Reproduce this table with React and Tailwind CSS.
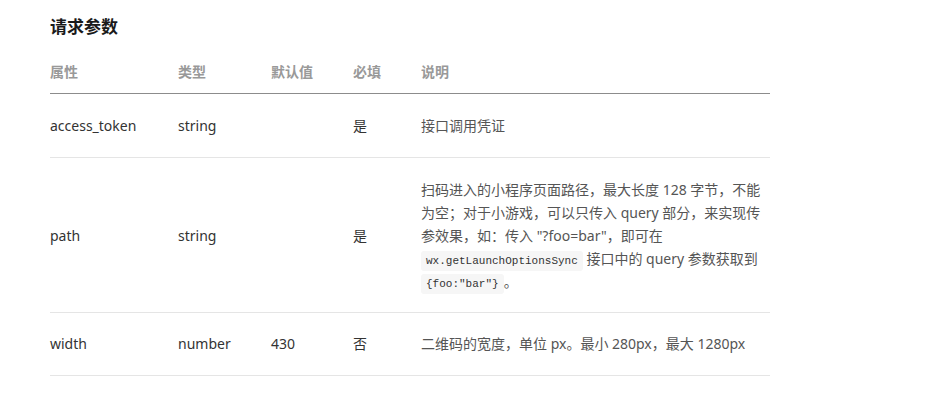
import React from 'react';

const codeCls =
  "rounded-[3px] bg-[#f6f6f6] px-[5px] py-[4px] font-['Liberation_Mono',monospace] text-[11px] leading-[12px] text-[#333]";

const rows = [
  { name: 'access_token', type: 'string', def: '', req: '是', pad: 'pt-[20px] pb-[20px]', desc: '接口调用凭证' },
  {
    name: 'path',
    type: 'string',
    def: '',
    req: '是',
    pad: 'pt-[20px] pb-[19px]',
    desc: (
      <>
        扫码进入的小程序页面路径，最大长度 128 字节，不能为空；对于小游戏，可以只传入 query 部分，来实现传参效果，如：传入 "?foo=bar"，即可在{' '}
        <code className={codeCls}>wx.getLaunchOptionsSync</code> 接口中的 query 参数获取到{' '}
        <code className={codeCls}>{'{foo:"bar"}'}</code>
        。
      </>
    ),
  },
  { name: 'width', type: 'number', def: '430', req: '否', pad: 'pt-[19px] pb-[20px]', desc: '二维码的宽度，单位 px。最小 280px，最大 1280px' },
];

export default function App() {
  return (
    <div className="min-h-screen bg-white px-[50px] pt-[14px] font-['Noto_Sans','Noto_Sans_CJK_SC',sans-serif] text-[14px] text-[#333]">
      <h3 className="text-[17px] font-bold leading-[26px] text-[#1a1a1a]">请求参数</h3>
      <table className="mt-[13px] w-[720px] table-fixed border-collapse">
        <thead>
          <tr className="border-b border-[#8c8c8c]">
            <th className="w-[128px] pt-[8px] pb-[10px] text-left font-bold leading-[22px] text-[#999]">属性</th>
            <th className="w-[93px] pt-[8px] pb-[10px] text-left font-bold leading-[22px] text-[#999]">类型</th>
            <th className="w-[82px] pt-[8px] pb-[10px] text-left font-bold leading-[22px] text-[#999]">默认值</th>
            <th className="w-[68px] pt-[8px] pb-[10px] text-left font-bold leading-[22px] text-[#999]">必填</th>
            <th className="pt-[8px] pb-[10px] text-left font-bold leading-[22px] text-[#999]">说明</th>
          </tr>
        </thead>
        <tbody>
          {rows.map((r) => (
            <tr key={r.name} className="border-b border-[#e5e5e5]">
              <td className={`${r.pad} align-middle leading-[23px]`}>{r.name}</td>
              <td className={`${r.pad} align-middle leading-[23px]`}>{r.type}</td>
              <td className={`${r.pad} align-middle leading-[23px]`}>{r.def}</td>
              <td className={`${r.pad} align-middle leading-[23px]`}>{r.req}</td>
              <td className={`${r.pad} pr-[6px] align-middle leading-[23px] text-[#555]`}>{r.desc}</td>
            </tr>
          ))}
        </tbody>
      </table>
    </div>
  );
}
